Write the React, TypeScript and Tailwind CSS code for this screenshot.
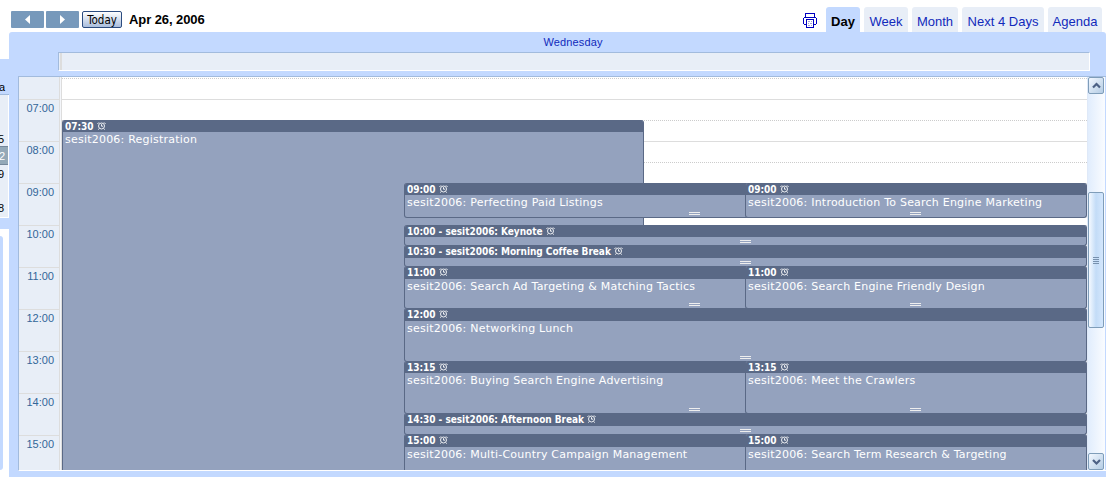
import clsx from 'clsx'

interface CalendarEvent {
  time: string
  title: string
  top: number
  height: number
  slot: 'main' | 'wide' | 'left' | 'right'
  inline?: boolean
}

const HOURS = ['07:00', '08:00', '09:00', '10:00', '11:00', '12:00', '13:00', '14:00', '15:00']

const VIEWS = [
  { label: 'Day', width: 'w-[34px]' },
  { label: 'Week', width: 'w-[44px]' },
  { label: 'Month', width: 'w-[46px]' },
  { label: 'Next 4 Days', width: 'w-[82px]' },
  { label: 'Agenda', width: 'w-[54px]' },
]

// top is measured from the first visible pixel of the day grid
const EVENTS: CalendarEvent[] = [
  { time: '07:30', title: 'Registration', top: 43, height: 380, slot: 'main' },
  { time: '09:00', title: 'Perfecting Paid Listings', top: 106, height: 35, slot: 'left' },
  { time: '09:00', title: 'Introduction To Search Engine Marketing', top: 106, height: 35, slot: 'right' },
  { time: '10:00', title: 'Keynote', top: 148, height: 21, slot: 'wide', inline: true },
  { time: '10:30', title: 'Morning Coffee Break', top: 168, height: 22, slot: 'wide', inline: true },
  { time: '11:00', title: 'Search Ad Targeting & Matching Tactics', top: 189, height: 43, slot: 'left' },
  { time: '11:00', title: 'Search Engine Friendly Design', top: 189, height: 43, slot: 'right' },
  { time: '12:00', title: 'Networking Lunch', top: 231, height: 54, slot: 'wide' },
  { time: '13:15', title: 'Buying Search Engine Advertising', top: 284, height: 53, slot: 'left' },
  { time: '13:15', title: 'Meet the Crawlers', top: 284, height: 53, slot: 'right' },
  { time: '14:30', title: 'Afternoon Break', top: 336, height: 22, slot: 'wide', inline: true },
  { time: '15:00', title: 'Multi-Country Campaign Management', top: 357, height: 60, slot: 'left' },
  { time: '15:00', title: 'Search Term Research & Targeting', top: 357, height: 60, slot: 'right' },
]

const SLOTS = {
  main: 'left-0 w-[582px]',
  wide: 'left-[342px] w-[683px]',
  left: 'left-[342px] w-[582px]',
  right: 'left-[683px] w-[342px]',
}

function AlarmIcon() {
  return (
    <svg className="ml-[3px] mt-0.5 shrink-0" width="9" height="8" viewBox="0 0 9 8" fill="none" stroke="#fff" strokeWidth="0.9">
      <circle cx="4.5" cy="4" r="3" />
      <path d="M4.5 2.2V4.2H6M.4 2L2 .4M8.6 2L7 .4M1.2 7.6L2.3 6.5M7.8 7.6L6.7 6.5" />
    </svg>
  )
}

function PrinterIcon() {
  return (
    <svg className="mt-[13px] shrink-0" width="14" height="15" viewBox="0 0 14 15" fill="#0000c0" shapeRendering="crispEdges">
      <path d="M2 0H12V1H2ZM2 1H3V4H2ZM11 1H12V4H11Z" />
      <path d="M1 4H13V5H1ZM0 5H1V11H0ZM13 5H14V11H13ZM1 11H3V12H1ZM11 11H13V12H11Z" />
      <path d="M3 6H11V7H3ZM3 7H4V15H3ZM10 7H11V15H10ZM4 14H10V15H4Z" />
      <path fill="#a0a0d8" d="M5 8H7V9H5ZM8 8H9V9H8ZM5 10H6V11H5ZM7 10H9V11H7ZM5 12H7V13H5ZM8 12H9V13H8Z" />
    </svg>
  )
}

function EventBlock({ event }: { event: CalendarEvent }) {
  return (
    <div
      className={clsx(
        'absolute overflow-hidden rounded-[3px] border border-t-0 border-[#5a6986] bg-[#94a2be] text-white',
        SLOTS[event.slot],
      )}
      style={{ top: event.top, height: event.height }}
    >
      <div
        className={clsx(
          "flex overflow-hidden whitespace-nowrap bg-[#5a6986] pl-0.5 font-['DejaVu_Sans_Condensed','DejaVu_Sans',sans-serif] text-[10px] font-bold leading-[14px] tracking-[-0.03px]",
          event.top > 150 && event.top !== 284 ? 'h-[13px]' : 'h-3',
        )}
      >
        <span>{event.inline ? `${event.time} - sesit2006: ${event.title}` : event.time}</span>
        <AlarmIcon />
      </div>
      {!event.inline && (
        <p className="whitespace-nowrap pl-0.5 font-['DejaVu_Sans',sans-serif] text-[11px] leading-[16px] tracking-[0.22px]">
          sesit2006: {event.title}
        </p>
      )}
      <div className="absolute bottom-[2px] left-1/2 -ml-1.5 h-[3px] w-[11px] border-y border-[#eee]" />
    </div>
  )
}

function Toolbar() {
  return (
    <header className="flex h-8 w-[1106px] items-start pl-[11px] pr-[4px]">
      <button className="mt-[11px] flex h-[17px] w-[33px] items-center justify-center rounded-[1px] bg-[#7799bb]">
        <svg width="5" height="9" viewBox="0 0 5 9"><path fill="#fff" d="M5 0V9L0 4.5Z" /></svg>
      </button>
      <button className="ml-0.5 mt-[11px] flex h-[17px] w-[33px] items-center justify-center rounded-[1px] bg-[#7799bb]">
        <svg width="5" height="9" viewBox="0 0 5 9"><path fill="#fff" d="M0 0V9L5 4.5Z" /></svg>
      </button>
      <button className="ml-[3px] mt-[11px] h-[17px] w-10 rounded-[2px] border border-[#2c4c80] bg-linear-to-b from-white to-[#a9bddc] font-['DejaVu_Sans_Condensed',sans-serif] text-[11.5px] leading-[17px] text-black">
        Today
      </button>
      <h1 className="ml-[7px] mt-3 whitespace-nowrap font-['Liberation_Sans',sans-serif] text-[13px] font-bold leading-[15px] tracking-[-0.08px] text-black">
        Apr 26, 2006
      </h1>
      <nav className="ml-auto flex gap-1">
        <PrinterIcon />
        {VIEWS.map(({ label, width }) => (
          <a
            key={label}
            className={clsx(
              "mt-[7px] h-[25px] whitespace-nowrap rounded-t-[3px] text-center font-['Liberation_Sans',sans-serif] text-[13px] leading-[29px]",
              width,
              label === 'Day' ? 'ml-[5px] bg-[#c3d9ff] font-bold text-black' : 'bg-[#e8eef7] text-[#112abb]',
            )}
          >
            {label}
          </a>
        ))}
      </nav>
    </header>
  )
}

function Sidebar() {
  return (
    <aside className="mt-[27px] w-[9px] shrink-0 overflow-hidden bg-[#c3d9ff] font-['Liberation_Sans',sans-serif] text-[11px] text-black">
      <div className="flex h-9 items-end justify-end border-b border-[#a2bbdd] pr-1 leading-[14px]">a</div>
      <div className="flex h-[123px] w-[9px] flex-col items-end border-b border-r border-white bg-[#e8eef7] leading-[18px]">
        <span className="mt-[35px] h-4 pr-1">5</span>
        <span className="flex h-[19px] w-2 justify-end border-y border-[#75889b] bg-[#94a9b8] pr-[3px] text-white">2</span>
        <span className="h-[17px] pr-1">9</span>
        <span className="mt-[17px] pr-1">8</span>
      </div>
      <div className="mt-[11px] h-[248px] bg-white pt-[7px]">
        <div className="h-[234px] w-[3px] rounded-r-[3px] bg-[#c3d9ff]" />
      </div>
    </aside>
  )
}

function Scrollbar() {
  return (
    <div className="flex w-[18px] flex-col items-end border-l border-[#dfe9f8] bg-linear-to-r from-[#e1edfd] to-[#fafcff] pr-px">
      <ScrollButton path="M1 5.5L4.5 2L8 5.5" />
      <div className="mt-[98px] flex h-[136px] w-4 items-center justify-center rounded-[2px] border border-[#7f9db9] bg-linear-to-r from-[#f4f9ff] via-[#c3dcf7] to-[#d4e7fd]">
        <div className="flex flex-col gap-px">
          {[0, 1, 2, 3].map((n) => (
            <span key={n} className="h-px w-1.5 bg-[#7791ae]" />
          ))}
        </div>
      </div>
      <div className="mt-auto">
        <ScrollButton path="M1 2L4.5 5.5L8 2" />
      </div>
    </div>
  )
}

function ScrollButton({ path }: { path: string }) {
  return (
    <div className="flex h-[17px] w-4 shrink-0 items-center justify-center rounded-[2px] border border-[#7f9db9] bg-linear-to-br from-[#f3f8ff] to-[#b4cce4]">
      <svg width="9" height="8" viewBox="0 0 9 8" fill="none" stroke="#4d6185" strokeWidth="2.2">
        <path d={path} />
      </svg>
    </div>
  )
}

function DayGrid() {
  return (
    <div className="ml-[9px] flex h-[395px] w-[1088px] overflow-hidden border-b border-l border-t border-b-white border-l-[#a2bbdd] border-t-[#a2bbdd]">
      <div className="w-[41px] border-r border-[#ddd] bg-[#e8eef7] font-['Liberation_Sans',sans-serif] text-[11px] text-[#336699]">
        <div className="h-[22px]" />
        {HOURS.map((hour) => (
          <div key={hour} className="h-[42px] border-t border-[#ddd] pr-[5px] pt-px text-right leading-[14px]">
            {hour}
          </div>
        ))}
      </div>
      <div className="w-0.5 border-r border-[#ddd] bg-[#f4f6fa]" />
      <div className="relative w-[1025px] overflow-hidden bg-white">
        <div className="mt-px h-[21px] border-t border-dotted border-[#ccc]" />
        {HOURS.map((hour) => (
          <div key={hour} className="h-[42px] border-t border-[#ddd]">
            <div className="mt-5 border-t border-dotted border-[#ccc]" />
          </div>
        ))}
        {EVENTS.map((event) => (
          <EventBlock key={`${event.time}-${event.slot}`} event={event} />
        ))}
      </div>
      <Scrollbar />
    </div>
  )
}

export default function App() {
  return (
    <div className="h-[477px] w-[1113px] overflow-hidden bg-white">
      <Toolbar />
      <div className="flex h-[445px]">
        <Sidebar />
        <main className="w-[1097px] rounded-t-[3px] bg-[#c3d9ff]">
          <div className="h-5 pl-[31px] text-center font-['Liberation_Sans',sans-serif] text-[11px] leading-[20px] tracking-[0.15px] text-[#112abb]">
            Wednesday
          </div>
          <div className="ml-[49px] flex h-[19px] w-[1032px] border border-b-white border-l-[#a2bbdd] border-r-white border-t-[#a2bbdd] bg-[#e8eef7]">
            <div className="ml-px w-0.5 border-x border-[#ddd]" />
          </div>
          <div className="h-[5px]" />
          <DayGrid />
        </main>
      </div>
    </div>
  )
}
